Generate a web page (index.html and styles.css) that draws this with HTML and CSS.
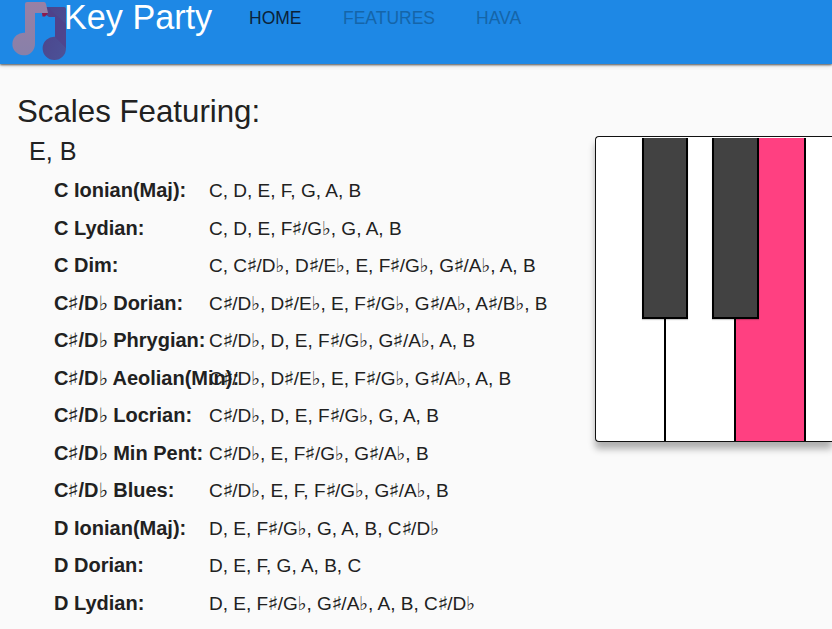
FILE: index.html
```html
<!DOCTYPE html>
<html lang="en">
<head>
<meta charset="utf-8">
<title>Key Party</title>
<link rel="stylesheet" href="styles.css">
</head>
<body>
<header class="toolbar">
  <svg class="logo" width="80" height="64" viewBox="0 0 80 64">
    <defs>
      <linearGradient id="left" x1="0" y1="0" x2="0" y2="1"><stop offset="0" stop-color="#9880a5"/><stop offset="1" stop-color="#8880a9"/></linearGradient>
      <linearGradient id="right" x1="0" y1="0" x2="1" y2="1"><stop offset="0" stop-color="#4c4389"/><stop offset="1" stop-color="#4c5298"/></linearGradient>
    </defs>
    <path fill="url(#right)" d="M43 7H64Q66 7 66 9V48A11.7 11.7 0 1 1 55 36.7V17H49L43 13Z"/>
    <path fill="#523e87" d="M48 8L66 24V48L55 37V17H49Z" opacity=".55"/>
    <path fill="#8d194c" d="M42 13H48L45 16.5H42.5Z"/>
    <path fill="url(#left)" d="M25 4Q25 2 27 2H44Q45.5 2 46 4L48 13H35V44A11.3 11.3 0 1 1 25 32.8Z"/>
  </svg>
  <h1 class="brand">Key Party</h1>
  <nav class="nav">
    <a class="nav-link active">HOME</a>
    <a class="nav-link features">FEATURES</a>
    <a class="nav-link">HAVA</a>
  </nav>
</header>
<main class="content">
  <section class="scales">
    <h2 class="title">Scales Featuring:</h2>
    <h3 class="selected">E, B</h3>
    <dl class="list" id="list"></dl>
  </section>
  <section class="keyboard">
    <div class="white"></div>
    <div class="white"></div>
    <div class="white pressed"></div>
    <div class="black c-sharp"></div>
    <div class="black d-sharp"></div>
  </section>
</main>
<script src="scales.js"></script>
</body>
</html>
```
FILE: styles.css
```css
* { box-sizing: border-box; }
body {
  margin: 0;
  height: 629px;
  overflow: hidden;
  background: #fafafa;
  color: #212121;
  font-family: "Liberation Sans", Arial, sans-serif;
}
h1, h2, h3, dl, dt, dd { margin: 0; font-weight: 400; }
.toolbar {
  display: flex;
  align-items: flex-start;
  height: 64px;
  background: #1e88e5;
  box-shadow: 0 1px 2px rgba(0, 0, 0, .6), 0 1px 5px rgba(0, 0, 0, .2);
}
.logo { flex: none; margin-right: -18px; }
.brand { width: 187px; padding-left: 2px; color: #fff; font-size: 34.2px; line-height: 35px; white-space: nowrap; }
.nav { display: flex; font-size: 17.5px; line-height: 36px; }
.nav-link { width: 94px; color: #1565a9; }
.nav-link.active { color: #0b2239; }
.nav-link.features { width: 133px; }
.content { display: flex; }
.scales { flex: none; width: 595px; padding: 28px 0 0 17px; }
.title { font-size: 31.25px; line-height: 40px; }
.selected { padding-left: 12px; font-size: 25.2px; line-height: 39px; }
.list { padding: 1px 0 0 37px; }
.row { display: flex; height: 37.55px; line-height: 37.55px; white-space: nowrap; }
.name { flex: none; width: 155px; font-size: 20px; font-weight: 700; }
.notes { font-size: 19.02px; }
.accidental {
  display: inline-block;
  width: .5em;
  font-family: "DejaVu Sans", sans-serif;
  font-weight: 400;
  line-height: 1;
  text-align: center;
  transform: scaleX(1.25);
}
.accidental.flat { width: .46em; transform: none; }
.keyboard {
  position: relative;
  display: flex;
  flex: none;
  width: 237px;
  height: 306px;
  margin-top: 72px;
  padding-top: 1px;
  border: 1px solid #111;
  border-right: 0;
  border-radius: 4px 0 0 4px;
  background: #fff;
  box-shadow: 0 7px 7px rgba(0, 0, 0, .3);
}
.white { width: 70px; border-right: 2px solid #000; }
.pressed { background: #ff4081; }
.black {
  position: absolute;
  top: 1px;
  width: 46px;
  height: 181px;
  border: 2px solid #000;
  border-top: 0;
  background: #424242;
  box-shadow: 0 1px 1px rgba(0, 0, 0, .2);
}
.c-sharp { left: 46px; }
.d-sharp { left: 116px; width: 47px; }
```
FILE: scales.js
```js
const scales = [
  ["C Ionian(Maj):", "C, D, E, F, G, A, B"],
  ["C Lydian:", "C, D, E, F♯/G♭, G, A, B"],
  ["C Dim:", "C, C♯/D♭, D♯/E♭, E, F♯/G♭, G♯/A♭, A, B"],
  ["C♯/D♭ Dorian:", "C♯/D♭, D♯/E♭, E, F♯/G♭, G♯/A♭, A♯/B♭, B"],
  ["C♯/D♭ Phrygian:", "C♯/D♭, D, E, F♯/G♭, G♯/A♭, A, B"],
  ["C♯/D♭ Aeolian(Min):", "C♯/D♭, D♯/E♭, E, F♯/G♭, G♯/A♭, A, B"],
  ["C♯/D♭ Locrian:", "C♯/D♭, D, E, F♯/G♭, G, A, B"],
  ["C♯/D♭ Min Pent:", "C♯/D♭, E, F♯/G♭, G♯/A♭, B"],
  ["C♯/D♭ Blues:", "C♯/D♭, E, F, F♯/G♭, G♯/A♭, B"],
  ["D Ionian(Maj):", "D, E, F♯/G♭, G, A, B, C♯/D♭"],
  ["D Dorian:", "D, E, F, G, A, B, C"],
  ["D Lydian:", "D, E, F♯/G♭, G♯/A♭, A, B, C♯/D♭"]
];
const accidentals = text => text
  .replace(/♯/g, '<span class="accidental">♯</span>')
  .replace(/♭/g, '<span class="accidental flat">♭</span>');
document.getElementById("list").innerHTML = scales.map(([name, notes]) =>
  `<div class="row"><dt class="name">${accidentals(name)}</dt><dd class="notes">${accidentals(notes)}</dd></div>`
).join("");
```
